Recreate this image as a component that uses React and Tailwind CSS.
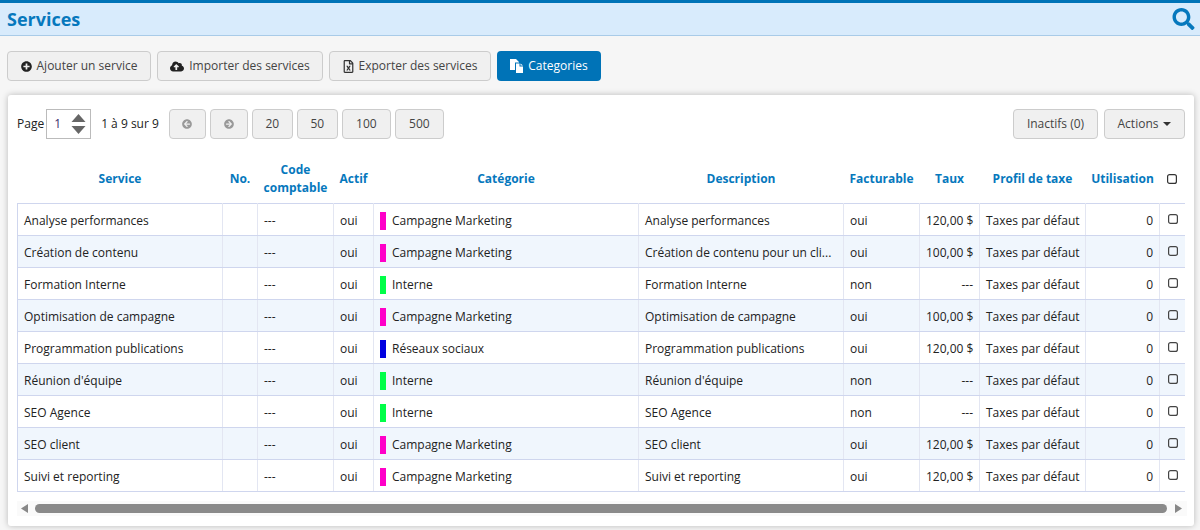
import React from "react";
import { FaPlusCircle, FaCloudUploadAlt, FaRegFileExcel, FaSearch, FaArrowCircleLeft, FaArrowCircleRight } from "react-icons/fa";

const MAGENTA = "bg-[#ff00c8]";
const GREEN = "bg-[#00ff48]";
const BLUE = "bg-[#0000e0]";

const services = [
  { name: "Analyse performances", cat: "Campagne Marketing", color: MAGENTA, desc: "Analyse performances", bill: "oui", rate: "120,00 $" },
  { name: "Création de contenu", cat: "Campagne Marketing", color: MAGENTA, desc: "Création de contenu pour un client", bill: "oui", rate: "100,00 $" },
  { name: "Formation Interne", cat: "Interne", color: GREEN, desc: "Formation Interne", bill: "non", rate: "---" },
  { name: "Optimisation de campagne", cat: "Campagne Marketing", color: MAGENTA, desc: "Optimisation de campagne", bill: "oui", rate: "100,00 $" },
  { name: "Programmation publications", cat: "Réseaux sociaux", color: BLUE, desc: "Programmation publications", bill: "oui", rate: "120,00 $" },
  { name: "Réunion d'équipe", cat: "Interne", color: GREEN, desc: "Réunion d'équipe", bill: "non", rate: "---" },
  { name: "SEO Agence", cat: "Interne", color: GREEN, desc: "SEO Agence", bill: "non", rate: "---" },
  { name: "SEO client", cat: "Campagne Marketing", color: MAGENTA, desc: "SEO client", bill: "oui", rate: "120,00 $" },
  { name: "Suivi et reporting", cat: "Campagne Marketing", color: MAGENTA, desc: "Suivi et reporting", bill: "oui", rate: "120,00 $" },
];

const headers = [
  { label: "Service", width: "w-[205px]" },
  { label: "No.", width: "w-[35px]" },
  { label: <>Code<br />comptable</>, width: "w-[76px]" },
  { label: "Actif", width: "w-[40px]" },
  { label: "Catégorie", width: "w-[265px]" },
  { label: "Description", width: "w-[205px]" },
  { label: "Facturable", width: "w-[76px]" },
  { label: "Taux", width: "w-[60px]" },
  { label: "Profil de taxe", width: "w-[106px]" },
  { label: "Utilisation", width: "w-[74px]" },
];

const ToolbarButton = ({ icon, children, className = "" }) => (
  <button className={`flex h-[30px] items-center justify-center gap-[5px] rounded-[4px] border border-[#ccc] bg-[#f0f0f0] text-[#444] ${className}`}>
    {icon}
    {children}
  </button>
);

const CheckBox = ({ className = "" }) => (
  <svg width="10" height="10" viewBox="0 0 10 10" className={className}>
    <rect x="0.6" y="0.6" width="8.8" height="8.8" rx="2" fill="none" stroke="currentColor" strokeWidth="1.2" />
  </svg>
);

const cell = "border border-[#e3e6f2] border-y-[#cfd6ee] px-[6px] pt-[3px] whitespace-nowrap overflow-hidden";

export default function App() {
  return (
    <div className="h-[530px] w-[1200px] overflow-hidden bg-[#f6f6f6] font-['Open_Sans','Noto_Sans',sans-serif] text-[12px] text-[#222]">
      <header className="flex h-[36px] items-center justify-between border-t-[3px] border-b border-t-[#0073b7] border-b-[#a9cbe8] bg-[#d8ebfc] pl-[7px] pr-[5px]">
        <h1 className="text-[18px] font-bold text-[#0678bd]">Services</h1>
        <FaSearch className="h-[22px] w-[23px] text-[#0678bd]" />
      </header>

      <div className="flex gap-[6px] pl-[7px] pt-[15px]">
        <ToolbarButton className="w-[144px]" icon={<FaPlusCircle className="h-[11px] w-[11px] text-[#222]" />}>Ajouter un service</ToolbarButton>
        <ToolbarButton className="w-[166px]" icon={<FaCloudUploadAlt className="h-[13px] w-[14px] text-[#222]" />}>Importer des services</ToolbarButton>
        <ToolbarButton className="w-[162px]" icon={<FaRegFileExcel className="h-[13px] w-[11px] text-[#333]" />}>Exporter des services</ToolbarButton>
        <button className="flex h-[30px] w-[104px] items-center justify-center gap-[5px] rounded-[4px] bg-[#0073b7] text-white">
          <svg width="13" height="14" viewBox="0 0 13 14">
            <path d="M0 0 H6 L9 3 V3.5 H5 V11 H0 Z" fill="currentColor" />
            <path d="M6 4.5 H9.5 V7.5 H13 V14 H6 Z M10.5 4.5 L13 6.5 H10.5 Z" fill="currentColor" />
          </svg>
          Categories
        </button>
      </div>

      <main className="ml-[8px] mt-[14px] h-[431px] w-[1186px] rounded-[3px] bg-white pl-[9px] pt-[14px] shadow-[0_0_6px_rgba(0,0,0,0.25)]">
        <div className="flex h-[32px] w-[1168px] items-start justify-between">
          <div className="flex items-center">
            <span className="mr-[2px] text-[#222]">Page</span>
            <div className="flex h-[30px] w-[45px] items-center justify-between border border-[#bbb] bg-white pl-[7px] pr-[4px] text-[#3b2a6b]">
              1
              <svg width="15" height="22" viewBox="0 0 15 22" className="text-[#666]">
                <path d="M7.5 1 L14.5 9 H0.5 Z M0.5 13 H14.5 L7.5 21 Z" fill="currentColor" />
              </svg>
            </div>
            <span className="mx-[10px] text-[#222]">1 à 9 sur 9</span>
            <div className="flex items-center gap-[4px]">
              <ToolbarButton className="w-[37px]" icon={<FaArrowCircleLeft className="h-[10px] w-[10px] text-[#999]" />} />
              <ToolbarButton className="w-[38px]" icon={<FaArrowCircleRight className="h-[10px] w-[10px] text-[#999]" />} />
              <ToolbarButton className="w-[41px]">20</ToolbarButton>
              <ToolbarButton className="w-[41px]">50</ToolbarButton>
              <ToolbarButton className="w-[49px]">100</ToolbarButton>
              <ToolbarButton className="w-[49px]">500</ToolbarButton>
            </div>
          </div>
          <div className="flex gap-[6px]">
            <ToolbarButton className="h-[28px] w-[85px]">Inactifs (0)</ToolbarButton>
            <ToolbarButton className="h-[29px] w-[81px] gap-[4px]">
              Actions
              <svg width="8" height="4" viewBox="0 0 8 4" className="text-[#333]"><path d="M0 0 H8 L4 4 Z" fill="currentColor" /></svg>
            </ToolbarButton>
          </div>
        </div>

        <table className="mt-[18px] w-[1168px] table-fixed border-collapse">
          <thead>
            <tr className="h-[44px]">
              {headers.map((h, i) => (
                <th key={i} className={`${h.width} pb-[3px] text-center text-[12px] font-bold leading-[18px] text-[#0678bd]`}>{h.label}</th>
              ))}
              <th className="pb-[3px]">
                <CheckBox className="mx-auto text-[#333]" />
              </th>
            </tr>
          </thead>
          <tbody>
            {services.map((s, i) => (
              <tr key={s.name} className={`h-[32px] ${i % 2 === 1 ? "bg-[#f0f6fd]" : "bg-white"}`}>
                <td className={`${cell} border-l-[#cfd6ee]`}>{s.name}</td>
                <td className={cell}></td>
                <td className={cell}>---</td>
                <td className={cell}>oui</td>
                <td className={cell}>
                  <div className="flex items-center gap-[6px]">
                    <span className={`h-[18px] w-[6px] ${s.color}`} />
                    {s.cat}
                  </div>
                </td>
                <td className={cell}>
                  {s.desc === "Création de contenu pour un client" ? "Création de contenu pour un cli..." : s.desc}
                </td>
                <td className={cell}>{s.bill}</td>
                <td className={`${cell} text-right`}>{s.rate}</td>
                <td className={cell}>Taxes par défaut</td>
                <td className={`${cell} text-right`}>0</td>
                <td className={`${cell} border-r-0`}>
                  <CheckBox className="mx-auto mb-[4px] text-[#444]" />
                </td>
              </tr>
            ))}
          </tbody>
        </table>

        <div className="mt-[9px] flex h-[15px] w-[1170px] items-center bg-[#fafafa]">
          <svg width="8" height="9" viewBox="0 0 8 9" className="ml-[4px] text-[#888]"><path d="M7 0 V9 L0 4.5 Z" fill="currentColor" /></svg>
          <div className="ml-[6px] h-[9px] w-[1132px] rounded-full bg-[#8a8a8a]" />
          <svg width="8" height="9" viewBox="0 0 8 9" className="ml-[8px] text-[#888]"><path d="M0 0 V9 L7 4.5 Z" fill="currentColor" /></svg>
        </div>
      </main>
    </div>
  );
}
